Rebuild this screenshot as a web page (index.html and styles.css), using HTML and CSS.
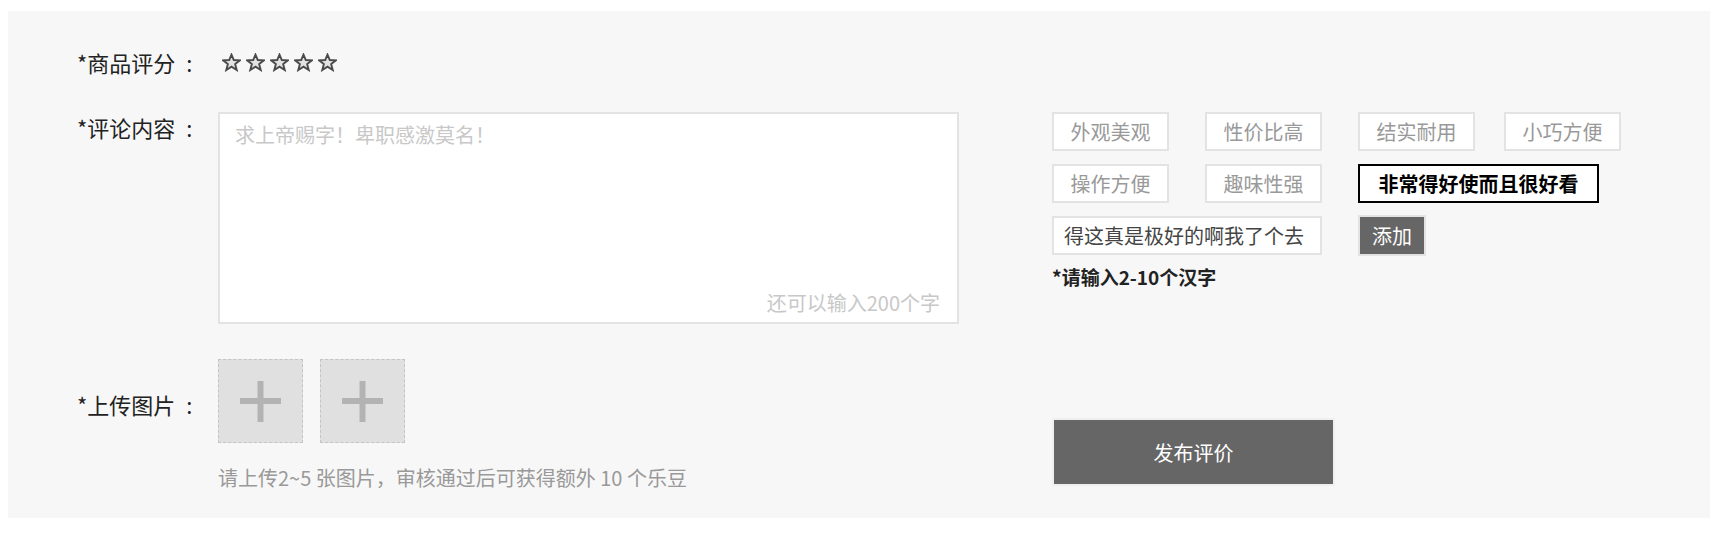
FILE: index.html
```html
<!DOCTYPE html>
<html lang="zh-CN">
<head>
<meta charset="utf-8">
<title>发表评价</title>
<link rel="stylesheet" href="styles.css">
</head>
<body>
<form class="panel">
  <div class="label label-rating">*商品评分<span class="colon">:</span></div>
  <div class="stars">
    <svg class="star" viewBox="0 0 24 24"><polygon points="12,2 14.9,8.9 22.5,9.3 16.6,14 18.6,21.5 12,17.3 5.4,21.5 7.4,14 1.5,9.3 9.1,8.9"/></svg>
    <svg class="star" viewBox="0 0 24 24"><polygon points="12,2 14.9,8.9 22.5,9.3 16.6,14 18.6,21.5 12,17.3 5.4,21.5 7.4,14 1.5,9.3 9.1,8.9"/></svg>
    <svg class="star" viewBox="0 0 24 24"><polygon points="12,2 14.9,8.9 22.5,9.3 16.6,14 18.6,21.5 12,17.3 5.4,21.5 7.4,14 1.5,9.3 9.1,8.9"/></svg>
    <svg class="star" viewBox="0 0 24 24"><polygon points="12,2 14.9,8.9 22.5,9.3 16.6,14 18.6,21.5 12,17.3 5.4,21.5 7.4,14 1.5,9.3 9.1,8.9"/></svg>
    <svg class="star" viewBox="0 0 24 24"><polygon points="12,2 14.9,8.9 22.5,9.3 16.6,14 18.6,21.5 12,17.3 5.4,21.5 7.4,14 1.5,9.3 9.1,8.9"/></svg>
  </div>
  <div class="spacer"></div>

  <div class="label label-comment">*评论内容<span class="colon">:</span></div>
  <div class="comment-box">
    <textarea class="comment-input" placeholder="求上帝赐字！卑职感激莫名！"></textarea>
    <div class="counter">还可以输入200个字</div>
  </div>
  <div class="tags-area">
    <div class="tags">
      <span class="tag">外观美观</span>
      <span class="tag">性价比高</span>
      <span class="tag">结实耐用</span>
      <span class="tag">小巧方便</span>
      <span class="tag">操作方便</span>
      <span class="tag">趣味性强</span>
      <span class="tag tag-active">非常得好使而且很好看</span>
      <input class="tag-input" type="text" value="得这真是极好的啊我了个去">
      <button type="button" class="add-btn">添加</button>
    </div>
    <div class="tag-tip">*请输入2-10个汉字</div>
  </div>

  <div class="label label-upload">*上传图片<span class="colon">:</span></div>
  <div class="upload">
    <div class="upload-boxes">
      <div class="upload-box"><svg class="plus" viewBox="0 0 41 41"><rect x="0" y="17" width="41" height="6"/><rect x="17.5" y="0" width="6" height="41"/></svg></div>
      <div class="upload-box"><svg class="plus" viewBox="0 0 41 41"><rect x="0" y="17" width="41" height="6"/><rect x="17.5" y="0" width="6" height="41"/></svg></div>
    </div>
    <div class="upload-hint">请上传2~5 张图片，审核通过后可获得额外 10 个乐豆</div>
  </div>
  <div class="submit-wrap">
    <button type="button" class="submit-btn">发布评价</button>
  </div>
</form>
</body>
</html>
```

FILE: styles.css
```css
html, body {
  background: #ffffff;
}
body {
  margin: 11px 8px 8px;
  font-family: "Noto Sans CJK SC", "Noto Sans", sans-serif;
  color: #333;
}
.panel {
  background: #f7f7f7;
  display: grid;
  grid-template-columns: 141px 741px 1fr;
  grid-template-rows: 30px 212px auto;
  row-gap: 35px;
  padding: 36px 0 28px 69px;
}
.label {
  font-size: 22px;
  line-height: 30px;
  color: #222;
  white-space: nowrap;
}
.colon {
  margin-left: 11px;
}
.label-upload {
  margin-top: 30px;
}
.stars {
  display: flex;
  align-items: center;
  gap: 5px;
  padding-left: 4px;
}
.star {
  width: 19px;
  height: 19px;
  fill: #e2e2e2;
  stroke: #4a4a4a;
  stroke-width: 2.4;
  stroke-linejoin: miter;
}
.comment-box {
  background: #fff;
  border: 2px solid #e3e3e3;
  box-sizing: border-box;
  display: flex;
  flex-direction: column;
}
.comment-input {
  flex: 1;
  border: none;
  outline: none;
  resize: none;
  background: transparent;
  padding: 9px 15px;
  font-family: "Noto Sans CJK SC", "Noto Sans", sans-serif;
  font-size: 20px;
  line-height: 24px;
  color: #333;
}
.comment-input::placeholder {
  color: #c8c8c8;
}
.counter {
  text-align: right;
  padding: 0 17px 7px;
  font-size: 20px;
  line-height: 24px;
  color: #c8c8c8;
}
.tags-area {
  margin-left: 93px;
}
.tags {
  display: grid;
  grid-template-columns: 153px 153px 146px auto;
  grid-auto-rows: 39px;
  row-gap: 13px;
}
.tag {
  width: 117px;
  box-sizing: border-box;
  background: #fff;
  border: 2px solid #e3e3e3;
  font-size: 20px;
  line-height: 35px;
  text-align: center;
  color: #999;
}
.tag-active {
  grid-column: 3 / 5;
  width: 241px;
  border-color: #000;
  color: #000;
  font-weight: bold;
}
.tag-input {
  grid-column: 1 / 3;
  width: 270px;
  height: 39px;
  box-sizing: border-box;
  margin: 0;
  border: 2px solid #e3e3e3;
  background: #fff;
  padding: 0 10px;
  font-family: "Noto Sans CJK SC", "Noto Sans", sans-serif;
  font-size: 20px;
  color: #444;
  outline: none;
}
.add-btn {
  width: 68px;
  height: 41px;
  margin: -1px 0 0;
  box-sizing: border-box;
  border: 2px solid #e3e3e3;
  background: #666;
  color: #fff;
  font-family: "Noto Sans CJK SC", "Noto Sans", sans-serif;
  font-size: 20px;
  padding: 0;
}
.tag-tip {
  margin-top: 10px;
  font-size: 19px;
  line-height: 24px;
  font-weight: bold;
  color: #222;
}
.upload-boxes {
  display: flex;
  gap: 17px;
}
.upload-box {
  width: 85px;
  height: 84px;
  box-sizing: border-box;
  border: 1px dashed #c4c4c4;
  background: #e0e0e0;
  display: flex;
  align-items: center;
  justify-content: center;
}
.plus {
  width: 41px;
  height: 41px;
  fill: #b3b3b3;
}
.upload-hint {
  margin-top: 23px;
  font-size: 20px;
  line-height: 24px;
  color: #999;
}
.submit-wrap {
  margin-left: 93px;
  padding-top: 59px;
}
.submit-btn {
  width: 283px;
  height: 68px;
  box-sizing: border-box;
  border: 2px solid #efefef;
  background: #666;
  color: #fff;
  font-family: "Noto Sans CJK SC", "Noto Sans", sans-serif;
  font-size: 20px;
  padding: 0;
}
```
